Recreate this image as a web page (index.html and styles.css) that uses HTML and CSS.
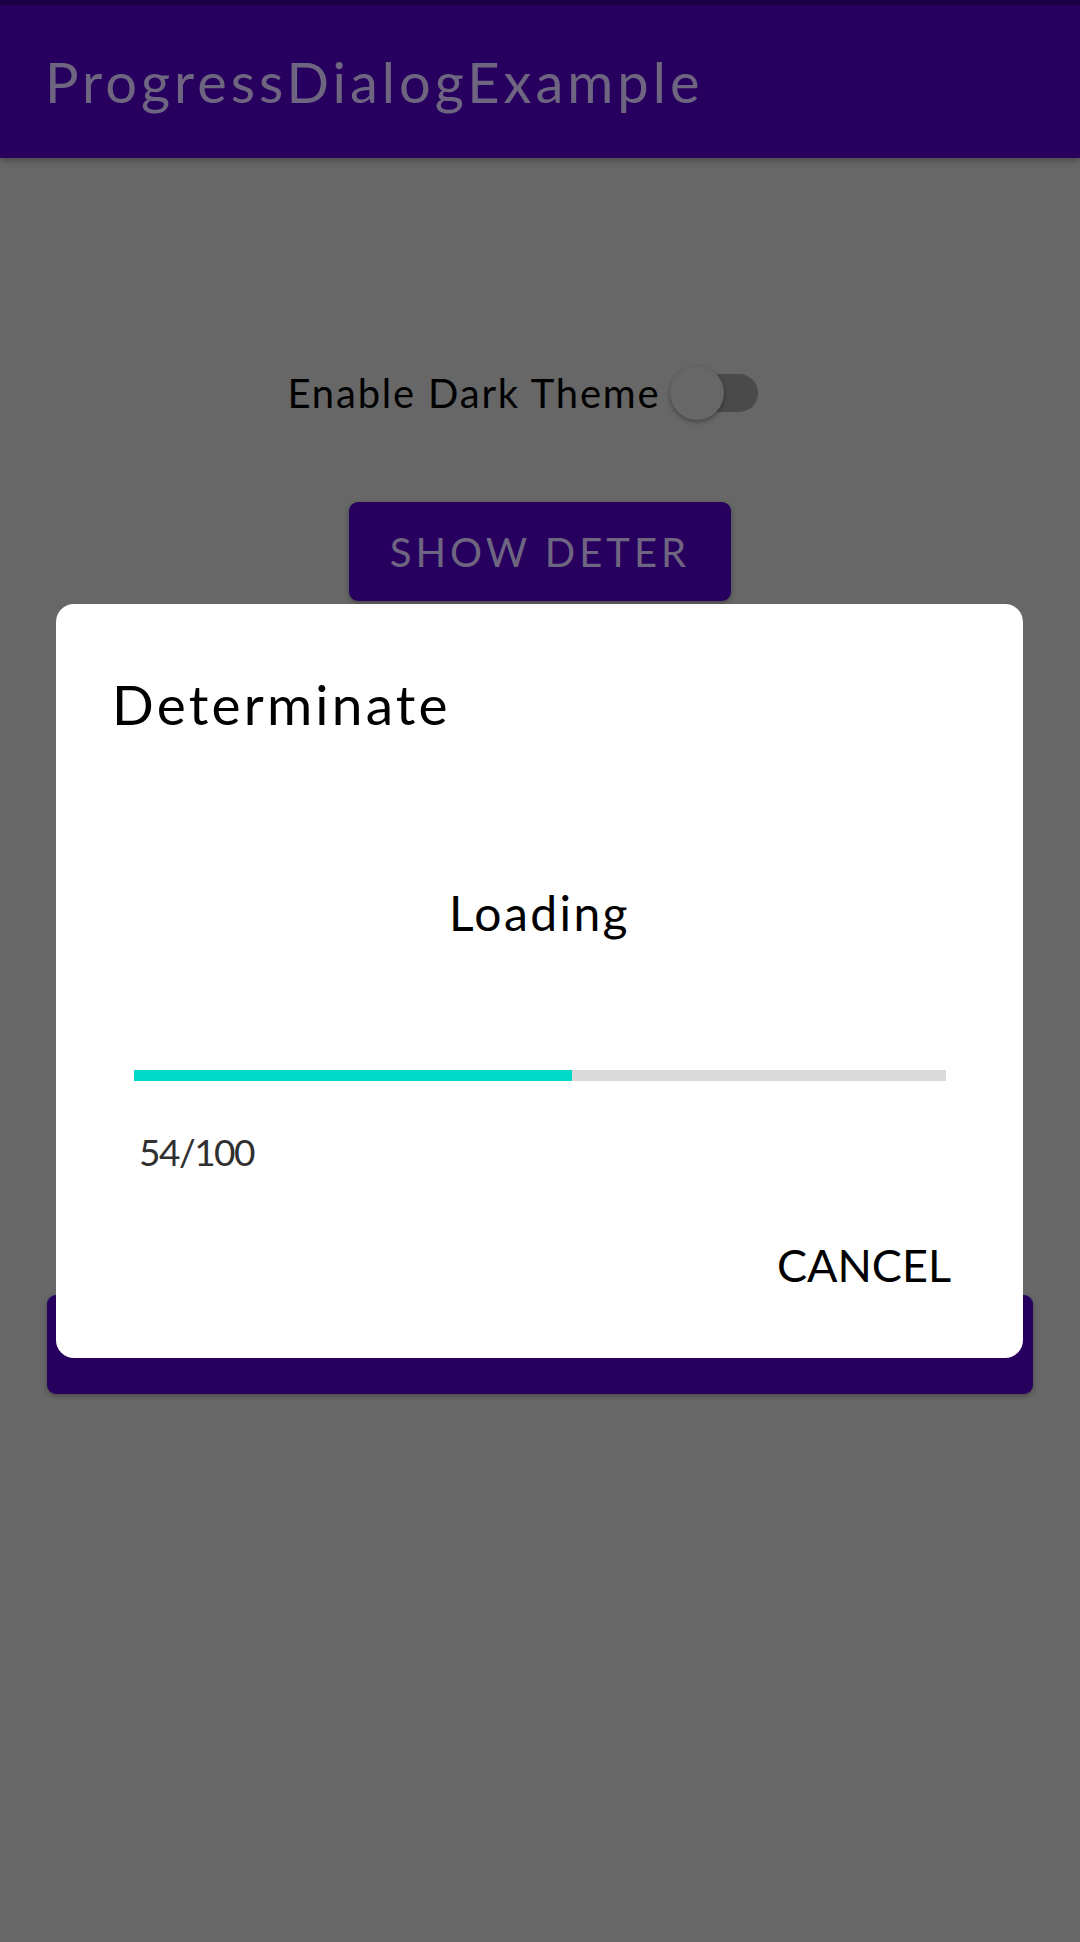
FILE: index.html
```html
<!DOCTYPE html>
<html>
<head>
<meta charset="utf-8">
<link rel="stylesheet" href="styles.css">
</head>
<body>
<div class="screen">
  <div class="statusbar"></div>
  <header class="appbar"><span class="title">ProgressDialogExample</span></header>
  <main class="content">
    <div class="switch-row">
      <span class="switch-label">Enable Dark Theme</span>
      <span class="switch"><span class="track"></span><span class="thumb"></span></span>
    </div>
    <div class="btn btn-small">SHOW DETER</div>
    <div class="btn btn-wide"></div>
  </main>
  <div class="dialog">
    <div class="dlg-title">Determinate</div>
    <div class="dlg-msg">Loading</div>
    <div class="progress"><div class="progress-fill" style="width:54%"></div></div>
    <div class="progress-count">54/100</div>
    <div class="dlg-actions"><span class="dlg-btn">CANCEL</span></div>
  </div>
</div>
</body>
</html>
```
FILE: styles.css
```css
html, body {
  margin: 0;
  padding: 0;
}
body {
  background: #676767;
  font-family: Lato, "Open Sans", sans-serif;
  width: 1080px;
  height: 1942px;
  overflow: hidden;
}
.screen {
  position: relative;
  width: 1080px;
  height: 1942px;
}
.statusbar {
  height: 5px;
  background: #1c0046;
}
.appbar {
  height: 153px;
  background: #27005f;
  display: flex;
  align-items: center;
  padding-left: 45px;
  box-shadow: 0 3px 6px rgba(0,0,0,0.25);
}
.title {
  color: #6e6680;
  font-size: 56px;
  line-height: 1;
  letter-spacing: 4px;
}
.content {
  display: flex;
  flex-direction: column;
  align-items: center;
}
.switch-row {
  margin-top: 207px;
  display: flex;
  align-items: center;
  height: 56px;
  padding-right: 32px;
}
.switch-label {
  font-size: 40px;
  color: #000;
  line-height: 1;
  letter-spacing: 1.8px;
}
.switch {
  position: relative;
  width: 90px;
  height: 56px;
  margin-left: 10px;
}
.track {
  position: absolute;
  left: 4px;
  right: 2px;
  top: 9px;
  height: 38px;
  border-radius: 19px;
  background: #4a4a4a;
}
.thumb {
  position: absolute;
  left: 0;
  top: 1px;
  width: 54px;
  height: 54px;
  border-radius: 50%;
  background: #676767;
  box-shadow: 0 2px 4px rgba(0,0,0,0.35);
}
.btn {
  background: #27005f;
  border-radius: 9px;
  box-shadow: 0 2px 5px rgba(0,0,0,0.3);
}
.btn-small {
  margin-top: 81px;
  width: 382px;
  height: 99px;
  display: flex;
  align-items: center;
  justify-content: center;
  color: #6e6680;
  font-size: 40px;
  letter-spacing: 4px;
}
.btn-wide {
  margin-top: 694px;
  width: 986px;
  height: 99px;
}
.dialog {
  position: absolute;
  left: 56px;
  top: 604px;
  width: 967px;
  height: 754px;
  background: #fff;
  border-radius: 18px;
  box-sizing: border-box;
  display: flex;
  flex-direction: column;
}
.dlg-title {
  margin-top: 73px;
  margin-left: 56px;
  font-size: 55px;
  line-height: 55px;
  color: #000;
  letter-spacing: 3.2px;
}
.dlg-msg {
  margin-top: 157px;
  text-align: center;
  font-size: 48px;
  line-height: 48px;
  color: #000;
  letter-spacing: 2.4px;
}
.progress {
  margin: 133px 0 0 78px;
  width: 812px;
  height: 11px;
  background: #dadada;
}
.progress-fill {
  height: 100%;
  background: #00d8c8;
}
.progress-count {
  margin: 52px 0 0 83px;
  font-size: 37px;
  line-height: 37px;
  color: #303030;
  letter-spacing: -1.5px;
}
.dlg-actions {
  margin-top: 73px;
  display: flex;
  justify-content: flex-end;
  padding-right: 72px;
}
.dlg-btn {
  font-size: 45px;
  line-height: 45px;
  color: #000;
}
```
